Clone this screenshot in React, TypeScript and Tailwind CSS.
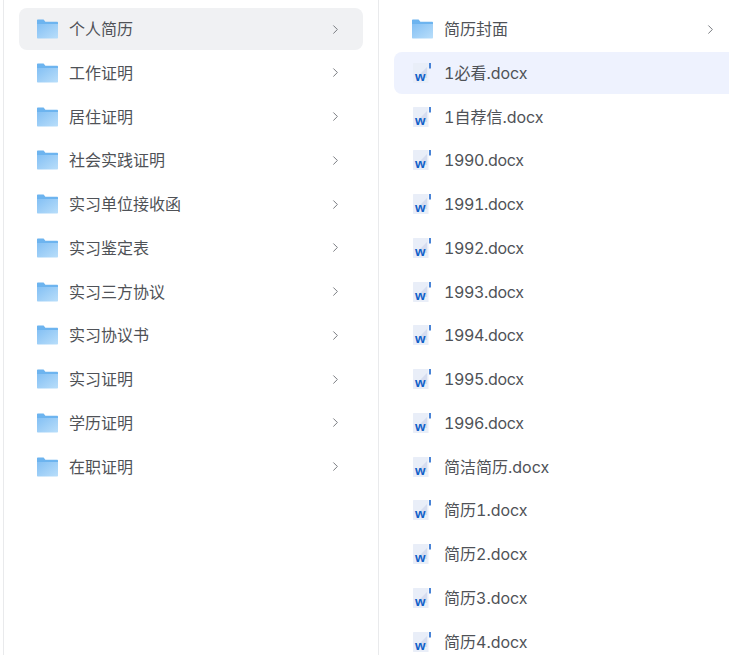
import { ChevronRight } from "lucide-react";

const folders = ["个人简历", "工作证明", "居住证明", "社会实践证明", "实习单位接收函", "实习鉴定表", "实习三方协议", "实习协议书", "实习证明", "学历证明", "在职证明"];
const files = ["1必看.docx", "1自荐信.docx", "1990.docx", "1991.docx", "1992.docx", "1993.docx", "1994.docx", "1995.docx", "1996.docx", "简洁简历.docx", "简历1.docx", "简历2.docx", "简历3.docx", "简历4.docx"];

const FolderIcon = ({ id }: { id: string }) => (
  <svg width="22" height="20" viewBox="1 0 22 20" className="shrink-0">
    <defs>
      <linearGradient id={id} x1="0" y1="0" x2="1" y2="1">
        <stop offset="0" stopColor="#84c0f4" />
        <stop offset="1" stopColor="#b9defa" />
      </linearGradient>
    </defs>
    <path d="M1 1.5C1 .9 1.4.5 2 .5h5.6l1.8 2.2H21c.6 0 1 .4 1 1V6H1z" fill="#6db4ef" />
    <path d="M1 5h21v13.5c0 .6-.4 1-1 1H2c-.6 0-1-.4-1-1z" fill={`url(#${id})`} />
  </svg>
);

const WordIcon = () => (
  <svg width="20" height="22" viewBox="0 0 20 22" className="shrink-0">
    <path d="M1 2C1 1.4 1.4 1 2 1h14.5v20H2c-.6 0-1-.4-1-1z" fill="#e9eef8" />
    <path d="M7 13l8-8v11H7z" fill="#d6ddf0" />
    <rect x="17.2" y="1" width="1.6" height="5.5" fill="#1f66cc" />
    <text x="3" y="18.5" fontSize="13.5" fontWeight="700" fill="#1160c8" fontFamily="Liberation Sans, sans-serif">w</text>
  </svg>
);

const Row = ({ icon, label, active, arrow }: { icon: React.ReactNode; label: string; active?: string; arrow?: boolean }) => (
  <div className={`flex h-[42px] mb-[1.75px] shrink-0 items-center rounded-lg pl-[18px] pr-[20px] ${active ?? ""}`}>
    <div className="flex w-[32px] shrink-0">{icon}</div>
    <span className={`flex-1 whitespace-nowrap text-[16px] tabular-nums text-[#4f5257] ${label.startsWith("199") ? "tracking-[-0.35px]" : ""}`}>{label}</span>
    {arrow && <ChevronRight size={15} strokeWidth={1.5} className="text-[#6f7277]" />}
  </div>
);

export default function App() {
  return (
    <div className="flex h-[655px] w-[729px] overflow-hidden bg-white pl-[3px] font-['Inter','Noto_Sans_CJK_SC',sans-serif]">
      <div className="flex w-[376px] shrink-0 flex-col border-x border-[#e9eaec] pl-[15px] pr-[15px] pt-2">
        {folders.map((name, i) => (
          <Row key={name} icon={<FolderIcon id={`l${i}`} />} label={name} arrow active={i === 0 ? "bg-[#f0f1f3]" : undefined} />
        ))}
      </div>
      <div className="flex w-[359px] shrink-0 flex-col pl-[15px] pt-2">
        <Row icon={<FolderIcon id="r0" />} label="简历封面" arrow />
        {files.map((name, i) => (
          <Row key={name} icon={<WordIcon />} label={name} active={i === 0 ? "bg-[#eef2fe]" : undefined} />
        ))}
      </div>
    </div>
  );
}
